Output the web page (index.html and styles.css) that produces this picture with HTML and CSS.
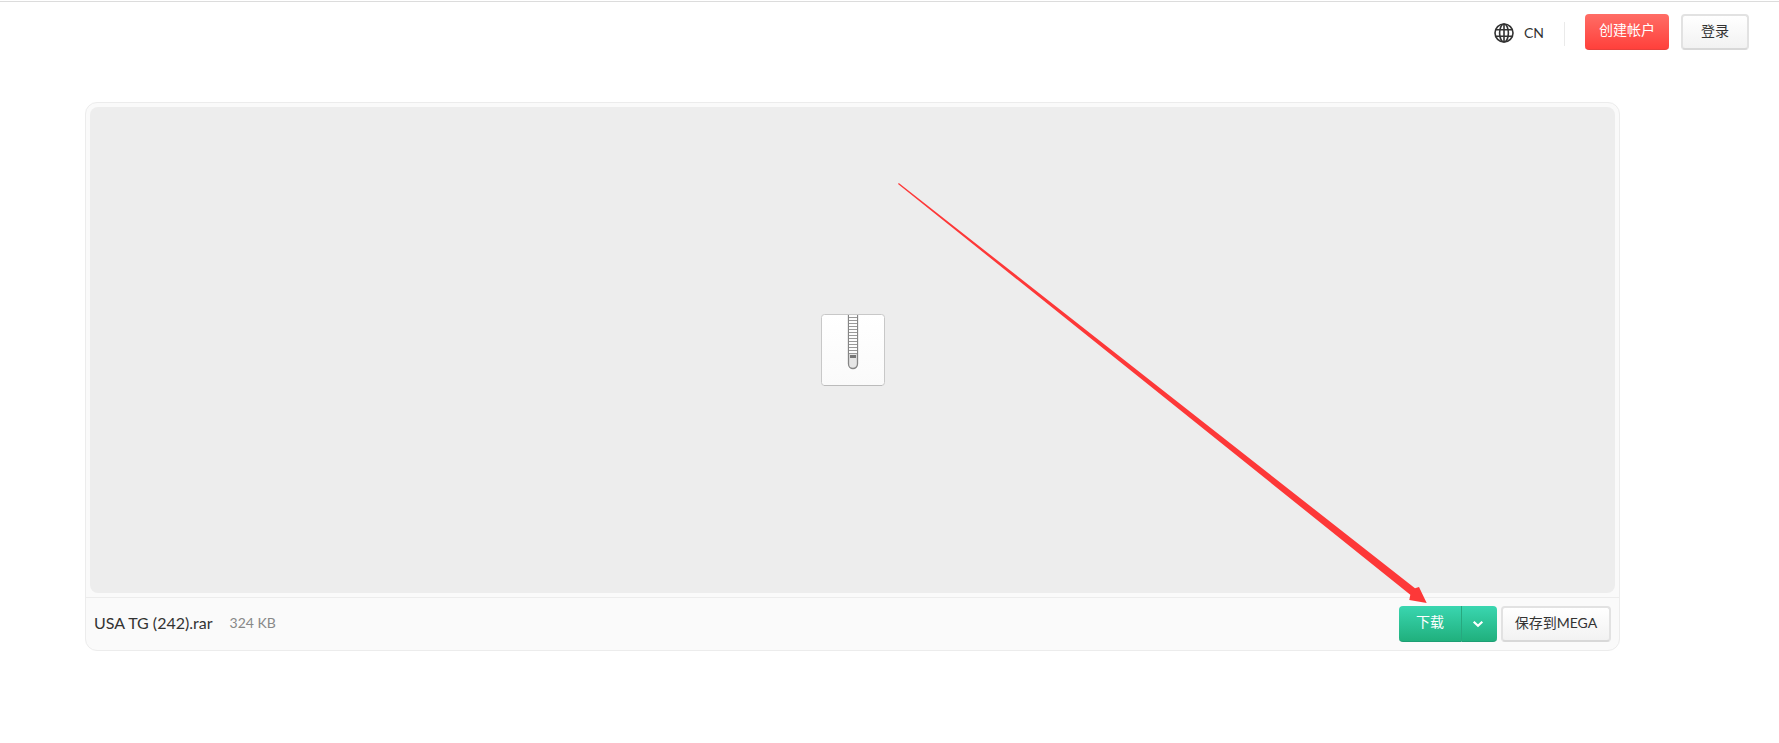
FILE: index.html
```html
<!doctype html>
<html lang="zh-CN">

	<head>
		<meta charset="utf-8">
		<title>MEGA</title>
		<link rel="stylesheet" href="styles.css">
	</head>

	<body>
		<!-- 顶部栏 -->
		<div class="top-head">
			<div class="language">
				<svg class="globe" viewBox="0 0 20 20">
					<circle cx="10" cy="10" r="9" />
					<ellipse cx="10" cy="10" rx="4.4" ry="9" />
					<path d="M10 1v18M2 6.7h16M2 13.3h16" />
				</svg>
				<span>CN</span>
			</div>
			<button type="button" class="btn red">创建帐户</button>
			<button type="button" class="btn login">登录</button>
		</div>

		<!-- 文件下载 -->
		<div class="download">
			<div class="viewer">
				<svg class="file-icon" viewBox="0 0 64 72">
					<defs>
						<linearGradient id="paper" x1="0" y1="0" x2="0" y2="1">
							<stop offset="0" stop-color="#fff" />
							<stop offset="1" stop-color="#fafafa" />
						</linearGradient>
					</defs>
					<rect class="paper" x="0.5" y="0.5" width="63" height="71" rx="3" />
					<path class="paper-edge" d="M3 71.5h58" />
					<path class="zip" d="M27.5 1v49a4.5 4.5 0 0 0 9 0V1" />
					<rect class="tape" x="28" y="1" width="8" height="38" />
					<path class="teeth" d="M28 3.5h8M28 6.5h8M28 9.5h8M28 12.5h8M28 15.5h8M28 18.5h8M28 21.5h8M28 24.5h8M28 27.5h8M28 30.5h8M28 33.5h8M28 36.5h8M28 39.5h8" />
					<rect class="pull" x="29" y="41" width="6" height="3" />
				</svg>
			</div>
			<div class="bar">
				<span class="name">USA TG (242).rar</span>
				<span class="size">324 KB</span>
				<div class="split">
					<button type="button" class="btn green">下载</button>
					<button type="button" class="btn green more">
						<svg viewBox="0 0 12 8"><path d="M1.7 1.7L6 5.7l4.3-4" /></svg>
					</button>
				</div>
				<button type="button" class="btn save">保存到MEGA</button>
			</div>
		</div>

		<!-- 指向下载按钮的箭头 -->
		<svg class="arrow" viewBox="0 0 530 422">
			<path d="M0 1L0.8 0 517 405.300 521 404 528.700 420 511.300 417 512.300 411.700z" />
		</svg>
	</body>

</html>
```

FILE: styles.css
```css
body {
	margin: 0;
	height: 743px;
	overflow: hidden;
	background: #fff;
	color: #333;
	font-family: Lato, "Noto Sans CJK SC", sans-serif;
	position: relative;
}

.top-head {
	display: flex;
	align-items: center;
	height: 60px;
	margin-top: 1px;
	padding-right: 30px;
	border-top: 1px solid #dcdcdc;
	box-sizing: border-box;
	justify-content: flex-end;
}

.language {
	display: flex;
	align-items: center;
	height: 24px;
	padding-right: 20px;
	margin: 4px 20px 0 0;
	border-right: 1px solid #eaeaea;
	font-size: 14px;
	line-height: 20px;
}

.language span {
	padding-bottom: 1px;
}

.globe {
	width: 20px;
	height: 20px;
	margin: 0 10px 1px 0;
	fill: none;
	stroke: #333;
	stroke-width: 1.6;
}

.btn {
	height: 36px;
	padding: 0 0 2px;
	box-sizing: border-box;
	border: 2px solid #e2e2e2;
	border-bottom-color: #d8d8d8;
	border-radius: 4px;
	background: linear-gradient(#fff, #f2f2f2);
	color: #333;
	font-family: inherit;
	font-size: 14px;
	line-height: 20px;
	white-space: nowrap;
}

.btn.red {
	width: 84px;
	margin-right: 12px;
	border: 0;
	border-bottom: 1px solid #e8403c;
	background: linear-gradient(#ff6d66, #ff403b);
	color: #fff;
}

.login {
	width: 68px;
}

.download {
	display: flex;
	flex-direction: column;
	width: 1535px;
	height: 549px;
	margin: 41px 0 0 85px;
	box-sizing: border-box;
	border: 1px solid #ececec;
	border-radius: 12px;
	background: #fafafa;
}

.viewer {
	display: flex;
	align-items: center;
	justify-content: center;
	height: 486px;
	margin: 4px;
	border-radius: 8px;
	background: #ededed;
}

.file-icon {
	width: 64px;
	height: 72px;
}

.paper {
	fill: url(#paper);
	stroke: #c8c8c8;
}

.paper-edge {
	stroke: #bbb;
}

.zip {
	fill: #e6e6e6;
	stroke: #858585;
	stroke-width: 1.3;
}

.tape {
	fill: #fcfcfc;
}

.teeth {
	stroke: #999;
}

.pull {
	fill: #777;
}

.bar {
	display: flex;
	align-items: center;
	flex: 1;
	padding: 0 8px 1px;
	border-top: 1px solid #ececec;
}

.name {
	font-size: 16px;
	padding-bottom: 3px;
}

.size {
	margin-left: 17px;
	padding-bottom: 3px;
	color: #888;
	font-size: 14px;
}

.split {
	display: flex;
	margin: 0 4px 0 auto;
}

.btn.green {
	width: 62px;
	border: 0;
	border-bottom: 1px solid #1c9e74;
	border-radius: 4px 0 0 4px;
	background: linear-gradient(#3ad6b0, #20b07d);
	color: #fff;
}

.btn.more {
	width: 36px;
	padding: 0 3px 0 0;
	border-left: 1px solid #27a87f;
	border-radius: 0 4px 4px 0;
}

.more svg {
	width: 12px;
	height: 8px;
	fill: none;
	stroke: #fff;
	stroke-width: 2.2;
}

.save {
	width: 110px;
}

.arrow {
	position: absolute;
	left: 898px;
	top: 183px;
	width: 530px;
	height: 422px;
	fill: #fd3838;
	pointer-events: none;
}
```
